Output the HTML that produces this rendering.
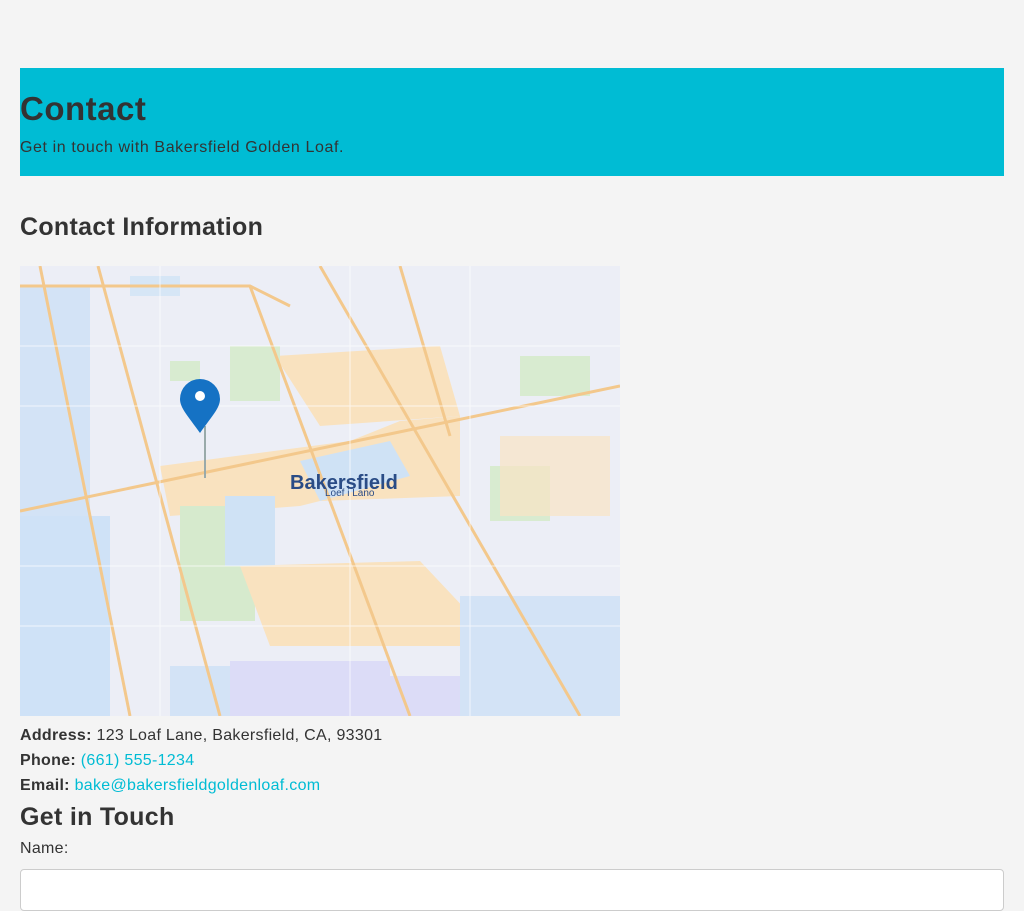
<!DOCTYPE html>
<html><head><meta charset="utf-8"><style>
body{margin:0;background:#f4f4f4;font-family:"Liberation Sans",sans-serif;color:#333;width:1024px;height:900px;overflow:hidden}
.hdr{position:absolute;left:20px;top:68px;width:984px;height:108px;background:#00bcd4}
.hdr h1{position:absolute;left:0;top:22px;margin:0;font-size:33px;font-weight:bold;color:#333;letter-spacing:.5px}
.hdr p{position:absolute;left:0;top:71px;margin:0;font-size:16px;letter-spacing:.6px}
h2{position:absolute;left:20px;margin:0;font-size:25px;font-weight:bold;letter-spacing:.3px}
.map{position:absolute;left:20px;top:266px}
.line{position:absolute;left:20px;font-size:16px;letter-spacing:.3px}
a{color:#00bcd4;text-decoration:none}
.inp{position:absolute;left:20px;top:869px;width:982px;height:40px;border:1px solid #ccc;border-radius:4px;background:#fff}
</style></head><body>
<div class="hdr"><h1>Contact</h1><p>Get in touch with Bakersfield Golden Loaf.</p></div>
<h2 style="top:213px">Contact Information</h2>
<svg class="map" width="600" height="450" viewBox="0 0 600 450">
<rect width="600" height="450" fill="#eceef6"/>
<rect x="0" y="20" width="70" height="230" fill="#d3e3f6"/>
<rect x="0" y="250" width="90" height="200" fill="#cfe2f7"/>
<rect x="110" y="10" width="50" height="20" fill="#d6e6f6"/>
<polygon points="140,200 330,175 380,155 440,150 440,230 300,235 280,240 150,250" fill="#f9e2bf"/>
<polygon points="255,90 420,80 440,150 300,160" fill="#f9e2bf"/>
<rect x="210" y="80" width="50" height="55" fill="#d8ebd0"/>
<rect x="150" y="95" width="30" height="20" fill="#d8ebd0"/>
<rect x="500" y="90" width="70" height="40" fill="#d8ebd0"/>
<rect x="470" y="200" width="60" height="55" fill="#d8ebd0"/>
<rect x="480" y="170" width="110" height="80" fill="#f9e4c4" opacity=".7"/>
<polygon points="280,195 370,175 390,210 300,235" fill="#cfe2f5"/>
<rect x="160" y="240" width="75" height="115" fill="#d6eacd"/>
<rect x="205" y="230" width="50" height="70" fill="#cfe2f5"/>
<polygon points="220,300 400,295 480,380 250,380" fill="#f9e2bf"/>
<rect x="210" y="395" width="160" height="55" fill="#dcdcf7"/>
<rect x="320" y="410" width="150" height="40" fill="#dcdcf7"/>
<rect x="440" y="330" width="160" height="120" fill="#d3e3f6"/>
<rect x="150" y="400" width="60" height="50" fill="#d3e3f6"/>
<g stroke="#f3c88c" stroke-width="3" fill="none">
<path d="M78 0 L200 450"/><path d="M20 0 L110 450"/><path d="M230 20 L390 450"/>
<path d="M300 0 L560 450"/><path d="M0 245 L600 120"/><path d="M0 20 L230 20 L270 40"/>
<path d="M380 0 L430 170"/>
</g>
<g stroke="#fff" stroke-width="1" opacity=".7">
<path d="M0 80H600M0 140H600M0 300H600M0 360H600M140 0V450M330 0V450M450 0V450"/>
</g>
<line x1="185" y1="160" x2="185" y2="212" stroke="#9aa" stroke-width="2"/>
<path d="M180 167 C 168 150 160 142 160 133 A20 20 0 0 1 200 133 C 200 142 192 150 180 167 Z" fill="#1572c4"/>
<circle cx="180" cy="130" r="5" fill="#fff"/>
<text x="270" y="223" font-size="20" font-weight="bold" fill="#2a4c86" font-family="Liberation Sans">Bakersfield</text>
<text x="305" y="230" font-size="10" fill="#2a4c86" font-family="Liberation Sans">Loef i Lano</text>
</svg>
<div class="line" style="top:727px"><b>Address:</b> 123 Loaf Lane, Bakersfield, CA, 93301</div>
<div class="line" style="top:752px"><b>Phone:</b> <a>(661) 555-1234</a></div>
<div class="line" style="top:777px"><b>Email:</b> <a>bake@bakersfieldgoldenloaf.com</a></div>
<h2 style="top:803px">Get in Touch</h2>
<div class="line" style="top:840px">Name:</div>
<div class="inp"></div>
</body></html>
